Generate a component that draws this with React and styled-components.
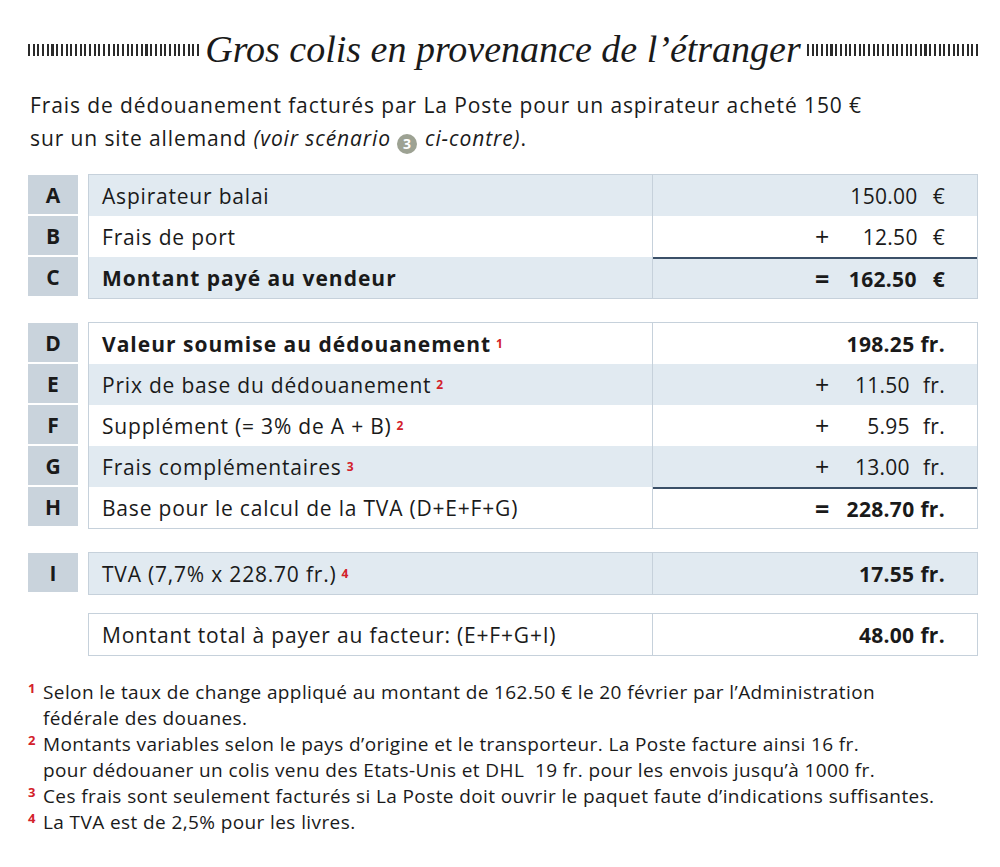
import React from 'react';
import styled, { createGlobalStyle } from 'styled-components';

const GlobalStyle = createGlobalStyle`
    body {
        margin: 0;
        background: #ffffff;
        color: #1a1a1a;
        font-family: "Open Sans", "Liberation Sans", sans-serif;
    }
`;

const Page = styled.div`
    width: 1000px;
    padding: 28px 22px 0 28px;
    box-sizing: border-box;
`;

const TitleRow = styled.div`
    display: flex;
    align-items: center;
    height: 42px;
`;

const Bars = styled.div`
    flex: 1;
    height: 12px;
    margin-top: 2px;
    background: repeating-linear-gradient(90deg, #2a2a2a 0 2px, transparent 2px 4.7px);
`;

const Title = styled.h1`
    margin: 0 6px;
    font-family: "Liberation Serif", serif;
    font-style: italic;
    font-weight: 400;
    font-size: 38px;
    white-space: nowrap;
`;

const Intro = styled.p`
    margin: 19px 0 19px 2px;
    font-size: 21px;
    line-height: 33px;
    letter-spacing: 0.9px;
`;

const Circled = styled.span`
    display: inline-flex;
    align-items: center;
    justify-content: center;
    width: 20px;
    height: 20px;
    margin: 0 8px 0 6px;
    border-radius: 50%;
    background: #9da293;
    color: #fff;
    font-style: normal;
    font-weight: 700;
    font-size: 14px;
    letter-spacing: 0;
    vertical-align: -3px;
`;

const Section = styled.div`
    display: flex;
    gap: 10px;
    margin-bottom: ${p => p.$space}px;
`;

const Letters = styled.div`
    width: 50px;
    display: flex;
    flex-direction: column;
    padding-top: 1px;
`;

const Letter = styled.div`
    height: 41px;
    box-sizing: border-box;
    border-bottom: 2px solid #fff;
    background: #c9d3dc;
    display: flex;
    align-items: center;
    justify-content: center;
    font-size: 21px;
    font-weight: 700;
`;

const Box = styled.div`
    flex: 1;
    border: 1px solid #c6d1db;
`;

const Row = styled.div`
    display: grid;
    grid-template-columns: 1fr 324px;
    height: 41px;
    background: ${p => (p.$shade ? '#e1eaf1' : '#ffffff')};
`;

const Label = styled.div`
    display: flex;
    align-items: center;
    padding-left: 13px;
    border-right: 1px solid #c6d1db;
    font-size: 21px;
    letter-spacing: ${p => (p.$bold ? '1px' : '0.8px')};
    white-space: nowrap;
    font-weight: ${p => (p.$bold ? 700 : 400)};
`;

const Note = styled.sup`
    margin-left: 5px;
    color: #d3212a;
    font-size: 12px;
    font-weight: 700;
    vertical-align: 9px;
    line-height: 0;
`;

const Value = styled.div`
    display: grid;
    grid-template-columns: 28px 1fr auto;
    align-items: center;
    padding: 0 32px 0 162px;
    font-size: 21px;
    letter-spacing: 0.3px;
    border-top: ${p => (p.$rule ? '2px solid #3b5068' : 'none')};
    box-sizing: border-box;
    font-weight: ${p => (p.$bold ? 700 : 400)};
`;

const Sign = styled.span`
    font-size: 25px;
    line-height: 1;
`;

const Num = styled.span`
    text-align: right;
`;

const Unit = styled.span`
    margin-left: ${p => p.$gap}px;
`;

const Footnotes = styled.div`
    margin-top: 23px;
    font-size: 19px;
    line-height: 26px;
    letter-spacing: 0.4px;
`;

const Foot = styled.p`
    margin: 0;
    padding-left: 15px;
    text-indent: -15px;
`;

const FootMark = styled.sup`
    display: inline-block;
    width: 15px;
    text-indent: 0;
    color: #d3212a;
    font-size: 13px;
    font-weight: 700;
    vertical-align: 6px;
    line-height: 0;
`;

const sections = [
    {
        space: 23,
        rows: [
            { k: 'A', label: 'Aspirateur balai', num: '150.00', unit: '€', shade: true },
            { k: 'B', label: 'Frais de port', sign: '+', num: '12.50', unit: '€' },
            { k: 'C', label: 'Montant payé au vendeur', sign: '=', num: '162.50', unit: '€', shade: true, bold: true, boldLabel: true, rule: true },
        ],
    },
    {
        space: 23,
        rows: [
            { k: 'D', label: 'Valeur soumise au dédouanement', note: 1, num: '198.25', unit: 'fr.', bold: true, boldLabel: true },
            { k: 'E', label: 'Prix de base du dédouanement', note: 2, sign: '+', num: '11.50', unit: 'fr.', shade: true },
            { k: 'F', label: 'Supplément (= 3%  de A + B)', note: 2, sign: '+', num: '5.95', unit: 'fr.' },
            { k: 'G', label: 'Frais complémentaires', note: 3, sign: '+', num: '13.00', unit: 'fr.', shade: true },
            { k: 'H', label: 'Base pour le calcul de la TVA (D+E+F+G)', sign: '=', num: '228.70', unit: 'fr.', bold: true, rule: true },
        ],
    },
    {
        space: 18,
        rows: [
            { k: 'I', label: 'TVA (7,7% x 228.70 fr.)', note: 4, num: '17.55', unit: 'fr.', shade: true, bold: true },
        ],
    },
    {
        space: 0,
        rows: [
            { label: 'Montant total à payer au facteur: (E+F+G+I)', num: '48.00', unit: 'fr.', bold: true },
        ],
    },
];

function unitGap(r) {
    if (r.unit === '€') return r.bold ? 16 : 15;
    return r.bold ? 6 : 13;
}

export default function App() {
    return (
        <Page>
            <GlobalStyle />
            <TitleRow>
                <Bars />
                <Title>Gros colis en provenance de l’étranger</Title>
                <Bars />
            </TitleRow>
            <Intro>
                Frais de dédouanement facturés par La Poste pour un aspirateur acheté 150&nbsp;€<br />
                sur un site allemand <i>(voir scénario<Circled>3</Circled>ci-contre)</i>.
            </Intro>

            {sections.map((s, i) => (
                <Section key={i} $space={s.space}>
                    <Letters>
                        {s.rows.map((r, j) => (r.k ? <Letter key={j}>{r.k}</Letter> : null))}
                    </Letters>
                    <Box>
                        {s.rows.map((r, j) => (
                            <Row key={j} $shade={r.shade}>
                                <Label $bold={r.boldLabel}>
                                    {r.label}
                                    {r.note && <Note>{r.note}</Note>}
                                </Label>
                                <Value $rule={r.rule} $bold={r.bold}>
                                    <Sign>{r.sign}</Sign>
                                    <Num>{r.num}</Num>
                                    <Unit $gap={unitGap(r)}>{r.unit}</Unit>
                                </Value>
                            </Row>
                        ))}
                    </Box>
                </Section>
            ))}

            <Footnotes>
                <Foot><FootMark>1</FootMark>Selon le taux de change appliqué au montant de 162.50 € le 20 février par l’Administration<br />fédérale des douanes.</Foot>
                <Foot><FootMark>2</FootMark>Montants variables selon le pays d’origine et le transporteur. La Poste facture ainsi 16 fr.<br />pour dédouaner un colis venu des Etats-Unis et DHL&nbsp; 19 fr. pour les envois jusqu’à 1000 fr.</Foot>
                <Foot><FootMark>3</FootMark>Ces frais sont seulement facturés si La Poste doit ouvrir le paquet faute d’indications suffisantes.</Foot>
                <Foot><FootMark>4</FootMark>La TVA est de 2,5% pour les livres.</Foot>
            </Footnotes>
        </Page>
    );
}
